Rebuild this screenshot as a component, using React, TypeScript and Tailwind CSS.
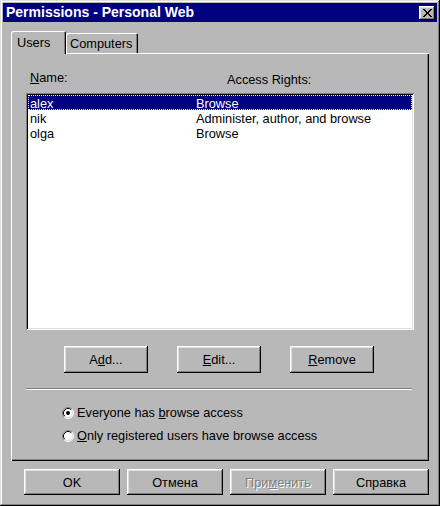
import type { ReactNode } from 'react'

const FONT = "font-['Liberation_Sans',Arial,sans-serif]"

const raised =
  'shadow-[inset_-1px_-1px_0_#000,inset_1px_1px_0_#fff,inset_-2px_-2px_0_#808080,inset_2px_2px_0_#dfdfdf]'

const X_PIXELS = [
  'XX.....XX',
  '.XX...XX.',
  '..XX.XX..',
  '...XXX...',
  '...XXX...',
  '..XX.XX..',
  '.XX...XX.',
  'XX.....XX',
]

const CloseGlyph = () => (
  <svg width="9" height="8" viewBox="0 0 9 8" shapeRendering="crispEdges">
    {X_PIXELS.flatMap((row, y) =>
      row
        .split('')
        .map((c, x) =>
          c === 'X' ? <rect key={`${x}-${y}`} x={x} y={y} width="1" height="1" fill="#000" /> : null,
        ),
    )}
  </svg>
)

const Radio = ({ checked }: { checked?: boolean }) => (
  <svg width="12" height="12" viewBox="0 0 12 12" className="shrink-0">
    <circle cx="6" cy="6" r="5" fill="#fff" />
    <path d="M2.11 9.89A5.5 5.5 0 0 1 9.89 2.11" fill="none" stroke="#808080" />
    <path d="M9.89 2.11A5.5 5.5 0 0 1 2.11 9.89" fill="none" stroke="#fff" />
    <path d="M2.82 9.18A4.5 4.5 0 0 1 9.18 2.82" fill="none" stroke="#000" />
    <path d="M9.18 2.82A4.5 4.5 0 0 1 2.82 9.18" fill="none" stroke="#dfdfdf" />
    {checked && <circle cx="6" cy="6" r="2" fill="#000" />}
  </svg>
)

const Button = ({
  children,
  className = '',
  disabled,
}: {
  children: ReactNode
  className?: string
  disabled?: boolean
}) => (
  <button
    type="button"
    className={`flex items-center justify-center bg-[#b8b8b8] ${raised} ${
      disabled ? 'text-[#808080] [text-shadow:1px_1px_0_#fff]' : 'text-black'
    } ${className}`}
  >
    {children}
  </button>
)

const users = [
  { name: 'alex', rights: 'Browse', selected: true },
  { name: 'nik', rights: 'Administer, author, and browse' },
  { name: 'olga', rights: 'Browse' },
]

export default function App() {
  return (
    <div
      className={`${FONT} flex h-[506px] w-[440px] flex-col bg-[#b8b8b8] p-[3px] text-[12.75px] leading-[15px] text-black shadow-[inset_-1px_-1px_0_#000,inset_1px_1px_0_#dfdfdf,inset_-2px_-2px_0_#808080,inset_2px_2px_0_#fff]`}
    >
      {/* title bar */}
      <div className="flex h-[19px] items-center justify-between bg-[#000080] pl-[3px] pr-[2px]">
        <span className="text-[14px] font-bold leading-[19px] text-white">
          Permissions - Personal Web
        </span>
        <div className={`flex h-[14px] w-[16px] items-center justify-center bg-[#b8b8b8] ${raised}`}>
          <CloseGlyph />
        </div>
      </div>

      <div className="flex flex-1 flex-col px-[8px] pt-[9px] pb-[8px]">
        {/* tabs */}
        <div className="flex h-[22px] items-end">
          <div className="relative z-10 -mb-[1px] h-[23px] w-[55px] rounded-t-[2px] bg-[#b8b8b8] pt-[4px] pl-[6px] shadow-[inset_1px_1px_0_#fff,inset_-1px_0_0_#000,inset_-2px_0_0_#808080]">
            Users
          </div>
          <div className="h-[20px] w-[72px] rounded-t-[2px] pt-[3px] pl-[4px] shadow-[inset_1px_1px_0_#fff,inset_-1px_0_0_#000,inset_-2px_0_0_#808080]">
            Computers
          </div>
        </div>

        {/* tab panel */}
        <div className="flex h-[408px] flex-col shadow-[inset_1px_1px_0_#fff,inset_-1px_-1px_0_#000,inset_-2px_-2px_0_#808080]">
          <div className="flex pt-[17px]">
            <span className="w-[197px] pl-[19px]">
              <u>N</u>ame:
            </span>
            <span className="mt-[2px] pl-[19px]">Access Rights:</span>
          </div>

          <div className="mt-[6px] ml-[15px] h-[237px] w-[388px] bg-white p-[2px] shadow-[inset_1px_1px_0_#808080,inset_-1px_-1px_0_#fff,inset_2px_2px_0_#000,inset_-2px_-2px_0_#dfdfdf]">
            {users.map((u) => (
              <div
                key={u.name}
                className={`flex h-[15px] ${
                  u.selected
                    ? 'border border-dotted border-[#ffff80] bg-[#000080] text-white'
                    : 'border border-transparent'
                }`}
              >
                <span className="w-[167px] pl-[1px]">{u.name}</span>
                <span>{u.rights}</span>
              </div>
            ))}
          </div>

          <div className="mt-[16px] flex justify-center gap-[29px] pr-[2px]">
            <Button className="h-[27px] w-[84px]">
              A<u>d</u>d...
            </Button>
            <Button className="h-[27px] w-[84px]">
              <u>E</u>dit...
            </Button>
            <Button className="h-[27px] w-[84px]">
              <u>R</u>emove
            </Button>
          </div>

          <div className="mt-[15px] ml-[15px] h-[2px] w-[386px] border-t border-b border-t-[#808080] border-b-white" />

          <div className="mt-[15px] flex flex-col gap-[8px] pl-[51px]">
            <label className="flex items-center gap-[3px]">
              <Radio checked />
              <span>
                Everyone has <u>b</u>rowse access
              </span>
            </label>
            <label className="flex items-center gap-[3px]">
              <Radio />
              <span>
                <u>O</u>nly registered users have browse access
              </span>
            </label>
          </div>
        </div>

        {/* dialog buttons */}
        <div className="mt-[8px] flex justify-end gap-[7px]">
          <Button className="h-[26px] w-[96px]">OK</Button>
          <Button className="h-[26px] w-[96px]">Отмена</Button>
          <Button className="h-[26px] w-[96px]" disabled>
            При<u>м</u>енить
          </Button>
          <Button className="h-[26px] w-[96px]">Справка</Button>
        </div>
      </div>
    </div>
  )
}
